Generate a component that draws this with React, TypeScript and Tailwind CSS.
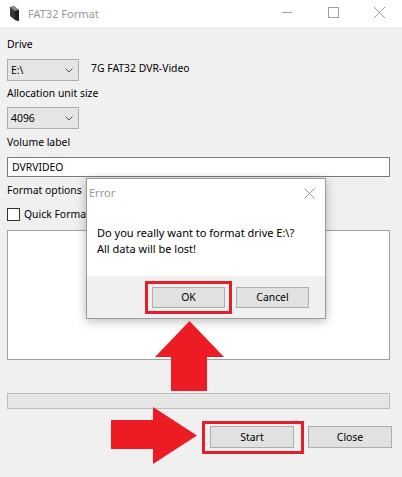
import React from "react";

function Chevron() {
  return (
    <svg width="8" height="5" viewBox="0 0 8 5" className="shrink-0">
      <path d="M0.5 0.5 L4 4 L7.5 0.5" fill="none" stroke="#555" strokeWidth="1" />
    </svg>
  );
}

function Combo({ value }: { value: string }) {
  return (
    <div className="flex h-[22px] w-[72px] items-center justify-between border border-[#adadad] bg-[#e5e5e5] pl-[3px] pr-[5px]">
      <span>{value}</span>
      <Chevron />
    </div>
  );
}

function WinButton({ label }: { label: string }) {
  return (
    <div className="flex h-[22px] w-[84px] items-center justify-center border border-[#adadad] bg-[#e1e1e1]">
      {label}
    </div>
  );
}

export default function App() {
  return (
    <div className="relative h-[477px] w-[402px] overflow-hidden bg-[#f0f0f0] font-['Segoe_UI','Noto_Sans',sans-serif] text-[10.4px] leading-4 text-black">
      {/* title bar */}
      <div className="flex h-[27px] items-center bg-white">
        <svg width="9" height="15" viewBox="0 0 9 15" className="ml-[10px]">
          <polygon points="0,1 4,0 9,4 9,15 5,14 0,10" fill="#3a3a3a" />
          <polygon points="0,1 4,0 9,4 5,5" fill="#8a8a8a" />
          <polygon points="5,5 9,4 9,15 5,14" fill="#1f1f1f" />
        </svg>
        <span className="ml-[9px] text-[11px] text-[#999]">FAT32 Format</span>
        <div className="ml-auto flex items-center">
          <svg width="46" height="27" viewBox="0 0 46 27">
            <line x1="18" y1="12.5" x2="28" y2="12.5" stroke="#a0a0a0" strokeWidth="1" />
          </svg>
          <svg width="46" height="27" viewBox="0 0 46 27">
            <rect x="18.5" y="7.5" width="10" height="10" fill="none" stroke="#a0a0a0" strokeWidth="1" />
          </svg>
          <svg width="46" height="27" viewBox="0 0 46 27">
            <path d="M18 7 L29 18 M29 7 L18 18" stroke="#a0a0a0" strokeWidth="1" />
          </svg>
        </div>
      </div>

      {/* window body */}
      <div className="flex flex-col px-[7px]">
        <div className="mt-[9px]">Drive</div>
        <div className="mt-[7px] flex items-center gap-[12px]">
          <Combo value="E:\" />
          <span className="-mt-[4px]">7G FAT32 DVR-Video</span>
        </div>
        <div className="mt-[4px]">Allocation unit size</div>
        <div className="mt-[6px]">
          <Combo value="4096" />
        </div>
        <div className="mt-[5px]">Volume label</div>
        <div className="mt-[7px] flex h-[20px] w-[383px] items-center border border-[#7a7a7a] bg-white pl-[4px]">
          DVRVIDEO
        </div>
        <div className="mt-[5px]">Format options</div>
        <div className="mt-[8px] flex items-center gap-[4px]">
          <div className="h-[13px] w-[13px] border border-[#333] bg-white" />
          <span>Quick Format</span>
        </div>
        <div className="mt-[8px] h-[130px] w-[383px] border border-[#a0a0a0] bg-white" />
        <div className="mt-[33px] h-[16px] w-[383px] border border-[#bcbcbc] bg-[#e6e6e6]" />
        <div className="mt-[17px] flex justify-end gap-[14px] pr-[3px]">
          <WinButton label="Start" />
          <WinButton label="Close" />
        </div>
      </div>

      {/* error dialog */}
      <div className="absolute left-[86px] top-[178px] flex h-[141px] w-[240px] flex-col border border-[#9a9a9a] bg-white shadow-[0_2px_10px_rgba(0,0,0,0.28)]">
        <div className="flex h-[27px] items-center justify-between pl-[2px] pr-[10px] pt-[1px]">
          <span className="text-[11px] text-[#999]">Error</span>
          <svg width="11" height="11" viewBox="0 0 11 11">
            <path d="M0.5 0.5 L10.5 10.5 M10.5 0.5 L0.5 10.5" stroke="#9a9a9a" strokeWidth="1" />
          </svg>
        </div>
        <div className="flex flex-1 flex-col justify-center pl-[10px] text-[11px] leading-[16px]">
          <div>Do you really want to format drive E:\?</div>
          <div>All data will be lost!</div>
        </div>
        <div className="flex h-[42px] items-center justify-end gap-[11px] bg-[#f0f0f0] pr-[16px]">
          <div className="flex h-[21px] w-[73px] items-center justify-center border border-[#adadad] bg-[#e1e1e1]">
            OK
          </div>
          <div className="flex h-[21px] w-[73px] items-center justify-center border border-[#adadad] bg-[#e1e1e1]">
            Cancel
          </div>
        </div>
      </div>

      {/* red highlights */}
      <div className="absolute left-[145px] top-[281px] h-[33px] w-[87px] border-[3px] border-[#e41e2b]" />
      <div className="absolute left-[202px] top-[421px] h-[33px] w-[102px] border-[3px] border-[#e41e2b]" />

      {/* red arrows */}
      <svg className="absolute left-[155px] top-[321px]" width="69" height="70" viewBox="0 0 69 70">
        <polygon points="34.5,0 69,36 52,36 52,70 16,70 16,36 0,36" fill="#ed1c24" />
      </svg>
      <svg className="absolute left-[111px] top-[407px]" width="86" height="57" viewBox="0 0 86 57">
        <polygon points="0,13 42,13 42,0 86,28.5 42,57 42,42 0,42" fill="#ed1c24" />
      </svg>
    </div>
  );
}
